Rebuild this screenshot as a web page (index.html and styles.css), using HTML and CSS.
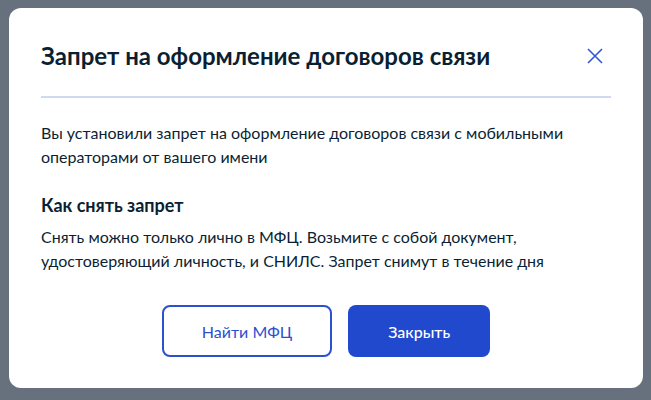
FILE: index.html
```html
<!DOCTYPE html>
<html lang="ru">
<head>
  <meta charset="UTF-8">
  <meta name="viewport" content="width=device-width, initial-scale=1.0">
  <title>Запрет на оформление договоров связи</title>
  <link rel="stylesheet" href="styles.css">
</head>
<body>
  <div class="overlay">
    <div class="modal">
      <div class="modal-header">
        <h2 class="modal-title">Запрет на оформление договоров связи</h2>
        <button class="close-btn" aria-label="Закрыть">
          <svg width="16" height="16" viewBox="0 0 16 16">
            <path d="M1 1L15 15M15 1L1 15" stroke="#3157d5" stroke-width="1.6" fill="none"/>
          </svg>
        </button>
      </div>
      <div class="divider"></div>
      <p class="text">Вы установили запрет на оформление договоров связи с мобильными операторами от вашего имени</p>
      <h3 class="subtitle">Как снять запрет</h3>
      <p class="text small-gap">Снять можно только лично в МФЦ. Возьмите с собой документ, удостоверяющий личность, и СНИЛС. Запрет снимут в течение дня</p>
      <div class="buttons">
        <button class="btn btn-outline">Найти МФЦ</button>
        <button class="btn btn-primary">Закрыть</button>
      </div>
    </div>
  </div>
</body>
</html>
```

FILE: styles.css
```css
html, body {
  margin: 0;
  padding: 0;
  height: 100%;
  background: #66717d;
  font-family: Lato, 'Open Sans', sans-serif;
  color: #0b1f33;
}

.overlay {
  padding: 8px 8px 0 9px;
}

.modal {
  width: 570px;
  background: #fff;
  border-radius: 12px;
  padding: 32px 32px 31px 32px;
}

.modal-header {
  display: flex;
  align-items: center;
  justify-content: space-between;
}

.modal-title {
  margin: 0;
  font-size: 24px;
  line-height: 32px;
  font-weight: 700;
}

.close-btn {
  background: none;
  border: none;
  padding: 0;
  margin-right: 8px;
  width: 16px;
  height: 16px;
  cursor: pointer;
}

.close-btn svg {
  display: block;
}

.divider {
  height: 2px;
  background: #cfdaf2;
  margin-top: 24px;
}

.text {
  margin: 23px 0 0 0;
  font-size: 16px;
  line-height: 24px;
}

.subtitle {
  margin: 24px 0 0 0;
  font-size: 18px;
  line-height: 24px;
  font-weight: 700;
}

.text.small-gap {
  margin-top: 8px;
}

.buttons {
  display: flex;
  justify-content: center;
  gap: 16px;
  margin-top: 32px;
}

.btn {
  height: 52px;
  padding: 0 40px;
  font-family: inherit;
  font-size: 16px;
  border-radius: 8px;
  cursor: pointer;
}

.btn-outline {
  background: #fff;
  color: #2d50cf;
  border: 2px solid #2d50cf;
  padding: 0 38px;
}

.btn-primary {
  background: #2049cd;
  color: #fff;
  border: none;
  font-weight: 500;
}
```
